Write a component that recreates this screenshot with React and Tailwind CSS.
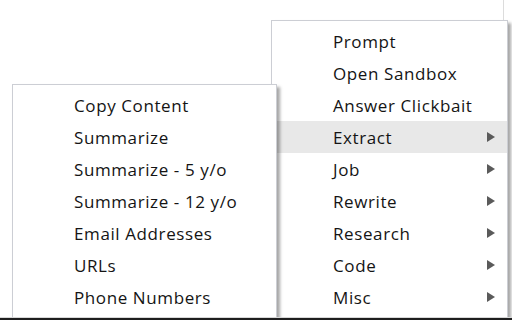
import React from 'react';

const mainItems = [
  { label: 'Prompt' },
  { label: 'Open Sandbox' },
  { label: 'Answer Clickbait' },
  { label: 'Extract', sub: true, active: true },
  { label: 'Job', sub: true },
  { label: 'Rewrite', sub: true },
  { label: 'Research', sub: true },
  { label: 'Code', sub: true },
  { label: 'Misc', sub: true },
];

const extractItems = [
  'Copy Content',
  'Summarize',
  'Summarize - 5 y/o',
  'Summarize - 12 y/o',
  'Email Addresses',
  'URLs',
  'Phone Numbers',
];

const Arrow = () => (
  <svg width="8" height="10" viewBox="0 0 8 10" className="shrink-0">
    <path d="M0 0 L8 5 L0 10 Z" fill="#5a5a5a" />
  </svg>
);

const MenuItem = ({ label, sub, active }) => (
  <div
    className={`flex h-8 items-center justify-between pl-[61px] pr-[12px] text-[#141414] ${
      active ? 'bg-[#e8e8e8]' : ''
    }`}
  >
    <span className="pt-[2px] tracking-[0.6px]">{label}</span>
    {sub && <Arrow />}
  </div>
);

export default function App() {
  return (
    <div
      className="relative h-[320px] w-[512px] overflow-hidden bg-white text-[17px] leading-8"
      style={{ fontFamily: '"Open Sans", "Noto Sans", sans-serif' }}
    >
      {/* page behind the menus */}
      <div className="absolute left-[503px] top-0 h-[20px] w-px bg-[#dcdcdc]" />

      {/* main context menu */}
      <div className="absolute left-[271px] top-[20px] w-[237px] border border-[#ccced4] bg-white pt-[4px] pb-[4px] shadow-[3px_3px_3px_rgba(0,0,0,0.35)]">
        {mainItems.map((it) => (
          <MenuItem key={it.label} {...it} />
        ))}
      </div>

      {/* Extract submenu */}
      <div className="absolute left-[12px] top-[84px] z-10 w-[265px] border border-[#ccced4] bg-white pt-[4px] pb-[4px] shadow-[3px_3px_3px_rgba(0,0,0,0.35)]">
        {extractItems.map((label) => (
          <MenuItem key={label} label={label} />
        ))}
      </div>

      {/* taskbar edge */}
      <div className="absolute bottom-0 left-0 z-20 h-[3px] w-full border-t border-[#d8d8d8] bg-[#1e1e1e]" />
    </div>
  );
}
